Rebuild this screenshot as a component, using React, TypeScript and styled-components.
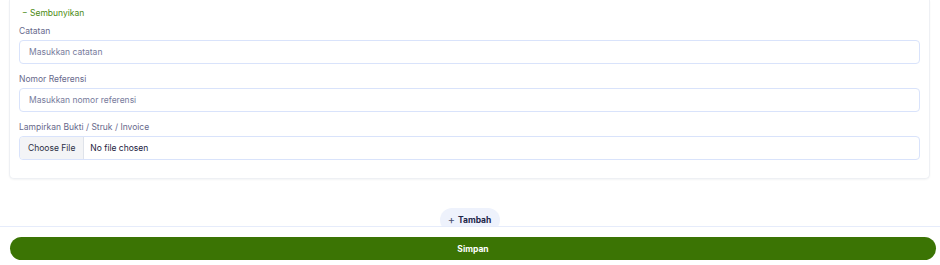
import React from "react";
import styled, { createGlobalStyle } from "styled-components";

const Global = createGlobalStyle`
  html, body { margin: 0; padding: 0; background: #ffffff; }
  body { font-family: Inter, "Noto Sans", sans-serif; -webkit-font-smoothing: antialiased; }
  * { box-sizing: border-box; }
`;

const Page = styled.div`
  height: 265px;
  display: flex;
  flex-direction: column;
  overflow: hidden;
`;

const Main = styled.main`
  flex: 1;
  min-height: 0;
  overflow: hidden;
  display: flex;
  flex-direction: column;
  align-items: center;
  padding: 0 10px 0 9px;
`;

const Card = styled.section`
  align-self: stretch;
  background: #fff;
  border: 1px solid #eef0f4;
  border-top: none;
  border-radius: 0 0 5px 5px;
  box-shadow: 0 1px 2px rgba(20, 30, 60, 0.05);
  padding: 7px 9px 18px 9px;
  display: flex;
  flex-direction: column;
`;

const ToggleLink = styled.button`
  align-self: flex-start;
  background: none;
  border: none;
  padding: 0 0 0 3px;
  margin: 0 0 6px 0;
  font-family: inherit;
  font-size: 8.5px;
  line-height: 12px;
  color: #4b8a12;
  cursor: pointer;
`;

const Fields = styled.div`
  display: flex;
  flex-direction: column;
  gap: 9px;
`;

const Field = styled.label`
  display: flex;
  flex-direction: column;
  gap: 3px;
`;

const LabelText = styled.span`
  font-size: 8.5px;
  line-height: 12px;
  color: #67698c;
`;

const TextInput = styled.input`
  height: 24px;
  width: 100%;
  border: 1px solid #d9e3fb;
  border-radius: 4px;
  padding: 0 9px;
  font-family: inherit;
  font-size: 8.5px;
  color: #1e2340;
  background: #fff;
  outline: none;
  &::placeholder { color: #777b9c; }
`;

const FileInput = styled.input`
  height: 24px;
  width: 100%;
  border: 1px solid #d9e3fb;
  border-radius: 4px;
  padding: 0;
  font-family: inherit;
  font-size: 8.5px;
  color: #1b2140;
  background: #fff;
  overflow: hidden;
  &::file-selector-button {
    height: 22px;
    margin: 0 6px 0 0;
    padding: 0 8px;
    border: none;
    border-right: 1px solid #dfe3ea;
    background: #f3f4f6;
    color: #2b2f45;
    font-family: inherit;
    font-size: 8.5px;
    border-radius: 3px 0 0 3px;
  }
`;

const AddButton = styled.button`
  margin-top: 29px;
  flex-shrink: 0;
  height: 24px;
  width: 60px;
  border: none;
  border-radius: 12px;
  background: #eef2fc;
  color: #1d2749;
  font-family: inherit;
  font-size: 8.5px;
  font-weight: 700;
  display: flex;
  align-items: center;
  justify-content: center;
  gap: 3px;
  padding: 0;
`;

const Plus = styled.span`
  font-weight: 400;
  font-size: 11px;
  color: #4a5170;
  line-height: 1;
`;

const Footer = styled.footer`
  flex-shrink: 0;
  border-top: 1px solid #e6ecfb;
  background: #fff;
  padding: 10px 4px 5px 10px;
`;

const SaveButton = styled.button`
  width: 100%;
  height: 23px;
  border: none;
  border-radius: 12px;
  background: #3b7404;
  color: #fff;
  font-family: inherit;
  font-size: 8.5px;
  font-weight: 700;
  display: block;
`;

export default function App() {
  return (
    <>
      <Global />
      <Page>
        <Main>
          <Card>
            <ToggleLink type="button">− Sembunyikan</ToggleLink>
            <Fields>
              <Field>
                <LabelText>Catatan</LabelText>
                <TextInput placeholder="Masukkan catatan" />
              </Field>
              <Field>
                <LabelText>Nomor Referensi</LabelText>
                <TextInput placeholder="Masukkan nomor referensi" />
              </Field>
              <Field>
                <LabelText>Lampirkan Bukti / Struk / Invoice</LabelText>
                <FileInput type="file" />
              </Field>
            </Fields>
          </Card>
          <AddButton type="button">
            <Plus>+</Plus>Tambah
          </AddButton>
        </Main>
        <Footer>
          <SaveButton type="button">Simpan</SaveButton>
        </Footer>
      </Page>
    </>
  );
}
